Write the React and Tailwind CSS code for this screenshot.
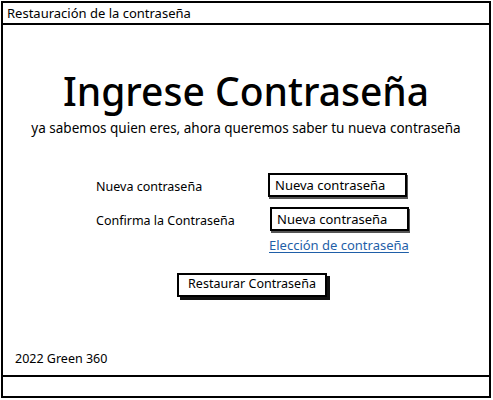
const font = { fontFamily: "'Noto Sans', 'Liberation Sans', sans-serif" }

const SketchInput = ({ className = "" }) => (
    <div className={`border-2 border-black bg-white shadow-[1px_2px_0_#555] h-[24px] w-[139px] px-[5px] flex items-center text-[13px] text-black ${className}`}>
        Nueva contraseña
    </div>
)

const App = () => {
    return (
        <div className='w-[493px] h-[400px] bg-white text-black flex flex-col' style={font}>
            <div className='flex flex-col flex-1 ml-[1px] mt-[1px] mr-[2px] mb-[2px] border-2 border-black'>

                <div className='h-[22px] border-b-2 border-black px-[4px] flex items-center text-[13px] leading-none'>
                    Restauración de la contraseña
                </div>

                <div className='flex-1 flex flex-col relative'>
                    <h1 className='text-center text-[39px] leading-none mt-[46px] font-medium'>Ingrese Contraseña</h1>
                    <p className='text-center text-[13.5px] mt-[8px]'>ya sabemos quien eres, ahora queremos saber tu nueva contraseña</p>

                    <div className='mt-[35px] ml-[93px] flex flex-col'>
                        <div className='flex items-center'>
                            <span className='w-[172px] text-[12.5px] pt-[4px]'>Nueva contraseña</span>
                            <SketchInput />
                        </div>
                        <div className='flex items-center mt-[10px]'>
                            <span className='w-[174px] text-[12.5px] pt-[4px]'>Confirma la Contraseña</span>
                            <SketchInput />
                        </div>
                        <a className='ml-[173px] mt-[5px] text-[13px] text-[#1f5fa8] underline underline-offset-2'>Elección de contraseña</a>
                    </div>

                    <div className='flex mt-[17px] ml-[174px]'>
                        <button className='border-2 border-black bg-white shadow-[3px_3px_0_#111] h-[24px] w-[150px] text-[12.5px] flex items-center justify-center'>
                            Restaurar Contraseña
                        </button>
                    </div>

                    <div className='mt-auto mb-[6px] ml-[12px] text-[12.5px]'>2022 Green 360</div>
                </div>

                <div className='h-[21px] border-t-2 border-black'></div>
            </div>
        </div>
    )
}

export default App
